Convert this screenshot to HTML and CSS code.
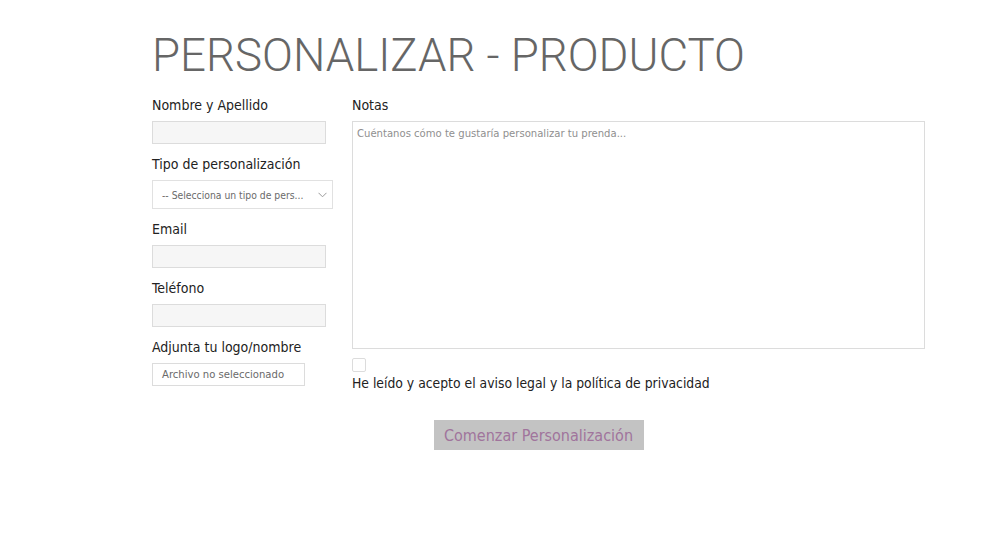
FILE: index.html
```html
<!DOCTYPE html>
<html lang="es">
<head>
<meta charset="utf-8">
<title>Personalizar - Producto</title>
<link rel="stylesheet" href="styles.css">
</head>
<body>
<main class="page">
  <h1 class="title">PERSONALIZAR - PRODUCTO</h1>
  <form class="form">
    <div class="col-left">
      <div class="field">
        <label class="label" for="nombre">Nombre y Apellido</label>
        <input class="input" id="nombre" type="text">
      </div>
      <div class="field">
        <label class="label" for="tipo">Tipo de personalización</label>
        <div class="select-wrap">
          <select class="select" id="tipo">
            <option>-- Selecciona un tipo de pers...</option>
          </select>
          <svg class="chevron" width="9" height="6" viewBox="0 0 9 6"><polyline points="0.5,0.8 4.5,4.8 8.5,0.8" fill="none" stroke="#9a9a9a" stroke-width="1"/></svg>
        </div>
      </div>
      <div class="field">
        <label class="label" for="email">Email</label>
        <input class="input" id="email" type="email">
      </div>
      <div class="field">
        <label class="label" for="tel">Teléfono</label>
        <input class="input" id="tel" type="tel">
      </div>
      <div class="field">
        <span class="label">Adjunta tu logo/nombre</span>
        <label class="file"><input class="file-input" type="file"><span>Archivo no seleccionado</span></label>
      </div>
    </div>
    <div class="col-right">
      <div class="field">
        <label class="label" for="notas">Notas</label>
        <textarea class="textarea" id="notas" placeholder="Cuéntanos cómo te gustaría personalizar tu prenda..."></textarea>
      </div>
      <label class="check">
        <input class="checkbox" type="checkbox">
        <span class="check-text">He leído y acepto el aviso legal y la política de privacidad</span>
      </label>
    </div>
    <div class="actions">
      <button class="button" type="button">Comenzar Personalización</button>
    </div>
  </form>
</main>
</body>
</html>
```

FILE: styles.css
```css
* { box-sizing: border-box; }

body {
  margin: 0;
  background: #ffffff;
  font-family: "DejaVu Sans Condensed", "DejaVu Sans", sans-serif;
  color: #222222;
}

.page {
  padding-left: 152px;
  width: 925px;
}

.title {
  margin: 33px 0 18px;
  font-family: Roboto, "Liberation Sans", sans-serif;
  font-weight: 300;
  font-size: 45.6px;
  line-height: 45px;
  color: #666666;
  letter-spacing: 0;
  white-space: nowrap;
}

.form {
  display: grid;
  grid-template-columns: 181px 573px;
  column-gap: 19px;
}

.field {
  display: flex;
  flex-direction: column;
  align-items: flex-start;
  margin-bottom: 11px;
}

.label {
  display: block;
  font-size: 14px;
  line-height: 18px;
  margin-bottom: 7px;
  color: #222222;
}

.input {
  width: 174px;
  height: 23px;
  border: 1px solid #dcdcdc;
  background: #f6f6f6;
  margin: 0;
  padding: 0 8px;
  font: inherit;
}

.select-wrap {
  position: relative;
  width: 181px;
  height: 29px;
}

.select {
  appearance: none;
  -webkit-appearance: none;
  width: 181px;
  height: 29px;
  border: 1px solid #e1e1e1;
  background: #ffffff;
  margin: 0;
  padding: 0 20px 0 9px;
  font-family: "DejaVu Sans Condensed", "DejaVu Sans", sans-serif;
  font-size: 10.3px;
  color: #6a6a6a;
  border-radius: 0;
}

.chevron {
  position: absolute;
  right: 6px;
  top: 12px;
}

.file {
  display: flex;
  align-items: center;
  width: 153px;
  height: 23px;
  border: 1px solid #dcdcdc;
  background: #ffffff;
  padding: 0 9px;
  font-size: 11.2px;
  color: #6a6a6a;
}

.file-input {
  display: none;
}

.textarea {
  width: 573px;
  height: 228px;
  border: 1px solid #dcdcdc;
  background: #ffffff;
  margin: 0;
  padding: 5px 4px;
  resize: none;
  font-family: "DejaVu Sans Condensed", "DejaVu Sans", sans-serif;
  font-size: 11.2px;
  line-height: 14px;
}

.textarea::placeholder {
  color: #8f8f8f;
}

.check {
  display: flex;
  flex-direction: column;
  align-items: flex-start;
  margin-top: -2px;
}

.checkbox {
  appearance: none;
  -webkit-appearance: none;
  width: 14px;
  height: 14px;
  margin: 0 0 2px;
  border: 1px solid #dcdcdc;
  border-radius: 2px;
  background: #ffffff;
}

.check-text {
  font-size: 13.8px;
  line-height: 18px;
  color: #222222;
}

.actions {
  grid-column: 1 / -1;
  display: flex;
  justify-content: center;
  padding-top: 23px;
}

.button {
  width: 210px;
  height: 30px;
  border: none;
  background: #c3c3c3;
  color: #a0749c;
  font-family: "DejaVu Sans Condensed", "DejaVu Sans", sans-serif;
  font-size: 16px;
  padding: 0;
}
```
